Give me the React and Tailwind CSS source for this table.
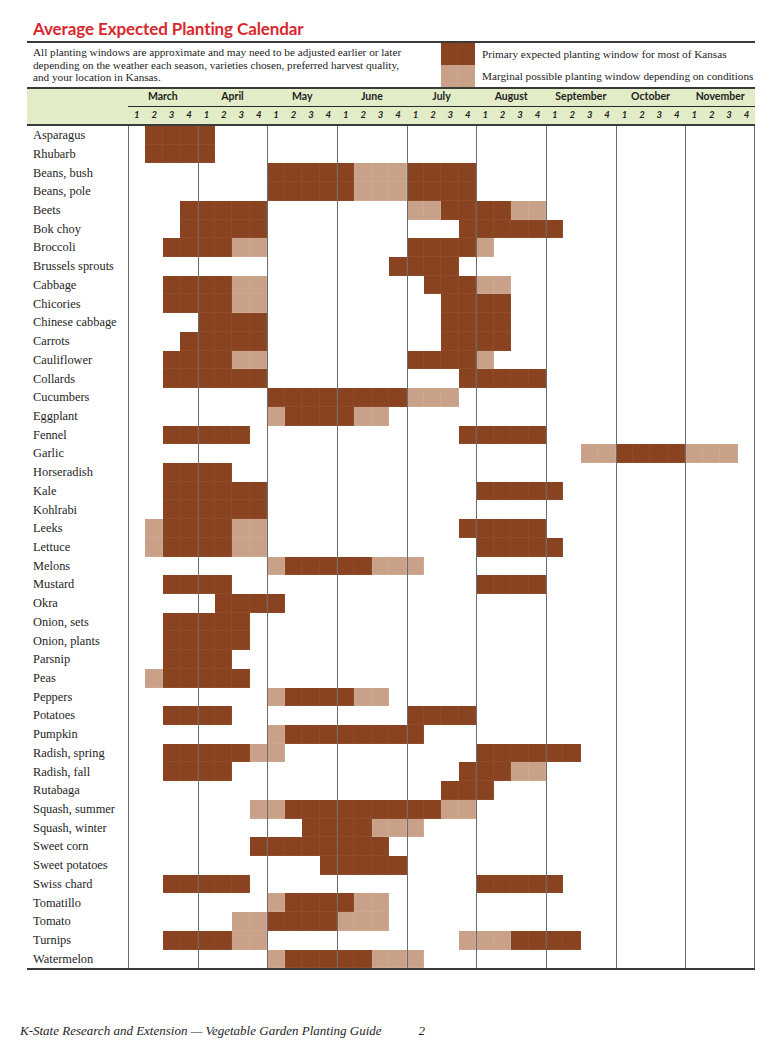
import React from "react";

const P = "p";
const M = "m";

const rows = [
  ["Asparagus", [[1, 4, P]]],
  ["Rhubarb", [[1, 4, P]]],
  ["Beans, bush", [[8, 12, P], [13, 15, M], [16, 19, P]]],
  ["Beans, pole", [[8, 12, P], [13, 15, M], [16, 19, P]]],
  ["Beets", [[3, 7, P], [16, 17, M], [18, 21, P], [22, 23, M]]],
  ["Bok choy", [[3, 7, P], [19, 24, P]]],
  ["Broccoli", [[2, 5, P], [6, 7, M], [16, 19, P], [20, 20, M]]],
  ["Brussels sprouts", [[15, 18, P]]],
  ["Cabbage", [[2, 5, P], [6, 7, M], [17, 19, P], [20, 21, M]]],
  ["Chicories", [[2, 5, P], [6, 7, M], [18, 21, P]]],
  ["Chinese cabbage", [[4, 7, P], [18, 21, P]]],
  ["Carrots", [[3, 7, P], [18, 21, P]]],
  ["Cauliflower", [[2, 5, P], [6, 7, M], [16, 19, P], [20, 20, M]]],
  ["Collards", [[2, 7, P], [19, 23, P]]],
  ["Cucumbers", [[8, 15, P], [16, 18, M]]],
  ["Eggplant", [[8, 8, M], [9, 12, P], [13, 14, M]]],
  ["Fennel", [[2, 6, P], [19, 23, P]]],
  ["Garlic", [[26, 27, M], [28, 31, P], [32, 34, M]]],
  ["Horseradish", [[2, 5, P]]],
  ["Kale", [[2, 7, P], [20, 24, P]]],
  ["Kohlrabi", [[2, 7, P]]],
  ["Leeks", [[1, 1, M], [2, 5, P], [6, 7, M], [19, 23, P]]],
  ["Lettuce", [[1, 1, M], [2, 5, P], [6, 7, M], [20, 24, P]]],
  ["Melons", [[8, 8, M], [9, 13, P], [14, 16, M]]],
  ["Mustard", [[2, 5, P], [20, 23, P]]],
  ["Okra", [[5, 8, P]]],
  ["Onion, sets", [[2, 6, P]]],
  ["Onion, plants", [[2, 6, P]]],
  ["Parsnip", [[2, 5, P]]],
  ["Peas", [[1, 1, M], [2, 6, P]]],
  ["Peppers", [[8, 8, M], [9, 12, P], [13, 14, M]]],
  ["Potatoes", [[2, 5, P], [16, 19, P]]],
  ["Pumpkin", [[8, 8, M], [9, 16, P]]],
  ["Radish, spring", [[2, 6, P], [7, 8, M], [20, 25, P]]],
  ["Radish, fall", [[2, 5, P], [19, 21, P], [22, 23, M]]],
  ["Rutabaga", [[18, 20, P]]],
  ["Squash, summer", [[7, 8, M], [9, 17, P], [18, 19, M]]],
  ["Squash, winter", [[10, 13, P], [14, 16, M]]],
  ["Sweet corn", [[7, 14, P]]],
  ["Sweet potatoes", [[11, 15, P]]],
  ["Swiss chard", [[2, 6, P], [20, 24, P]]],
  ["Tomatillo", [[8, 8, M], [9, 12, P], [13, 14, M]]],
  ["Tomato", [[6, 7, M], [8, 11, P], [12, 14, M]]],
  ["Turnips", [[2, 5, P], [6, 7, M], [19, 21, M], [22, 25, P]]],
  ["Watermelon", [[8, 8, M], [9, 13, P], [14, 16, M]]],
];

const months = ["March", "April", "May", "June", "July", "August", "September", "October", "November"];
const weeks = Array.from({ length: 36 }, (_, i) => i);

function typeAt(segs, i) {
  for (const [s, e, t] of segs) if (i >= s && i <= e) return t;
  return null;
}

function Row({ name, segs }) {
  return (
    <div className="grid grid-cols-[101px_repeat(36,1fr)] h-[18.72px]">
      <div className="pl-[6px] flex items-center text-[12.4px] leading-none text-[#1e1e1e] font-['Liberation_Serif',serif] whitespace-nowrap">
        {name}
      </div>
      {weeks.map((i) => {
        const t = typeAt(segs, i);
        const cls = [
          t === P ? "bg-[#8a4320] shadow-[inset_-1px_-1px_0_0_rgba(255,255,255,0.05)]" : "",
          t === M ? "bg-[#c9a188] shadow-[inset_-1px_-1px_0_0_rgba(255,255,255,0.09)]" : "",
          i % 4 === 0 ? "border-l border-[#6b6b6b]" : "",
          i === 35 ? "border-r-[1.5px] border-[#6b6b6b]" : "",
        ].join(" ");
        return <div key={i} className={cls} />;
      })}
    </div>
  );
}

export default function App() {
  return (
    <div className="w-[775px] h-[1040px] bg-white overflow-hidden">
      <div className="ml-[27px] w-[728px] pt-[17px]">
        <div className="h-[24px] pl-[6px] text-[17px] leading-[24px] font-bold text-[#d9272e] font-['Lato',sans-serif] tracking-[-0.1px]">
          Average Expected Planting Calendar
        </div>
        <div className="border-t-2 border-[#3a3a3a] flex h-[46px]">
          <div className="w-[414px] pl-[6px] pt-[3px] text-[11.2px] leading-[12.7px] text-[#1e1e1e] font-['Liberation_Serif',serif]">
            All planting windows are approximate and may need to be adjusted earlier or later
            <br />
            depending on the weather each season, varieties chosen, preferred harvest quality,
            <br />
            and your location in Kansas.
          </div>
          <div className="flex flex-col">
            <div className="flex h-[23px] items-center">
              <div className="flex h-full w-[34px]">
                <div className="flex-1 bg-[#8a4320] shadow-[inset_-1px_0_0_0_rgba(255,255,255,0.05)]" />
                <div className="flex-1 bg-[#8a4320]" />
              </div>
              <span className="pl-[7px] text-[11.2px] text-[#1e1e1e] font-['Liberation_Serif',serif] whitespace-nowrap">
                Primary expected planting window for most of Kansas
              </span>
            </div>
            <div className="flex h-[23px] items-center">
              <div className="flex h-full w-[34px]">
                <div className="flex-1 bg-[#c9a188] shadow-[inset_-1px_0_0_0_rgba(255,255,255,0.09)]" />
                <div className="flex-1 bg-[#c9a188]" />
              </div>
              <span className="pl-[7px] text-[11.2px] text-[#1e1e1e] font-['Liberation_Serif',serif] whitespace-nowrap">
                Marginal possible planting window depending on conditions
              </span>
            </div>
          </div>
        </div>
        <div className="border-t-2 border-b-2 border-[#3a3a3a] bg-[#e2ecc6] flex">
          <div className="w-[101px] shrink-0" />
          <div className="flex-1 flex flex-col">
            <div className="flex h-[17.5px] border-b-[1.5px] border-[#2a2a2a]">
              {months.map((m) => (
                <div
                  key={m}
                  className="flex-1 flex items-center justify-center text-[10.5px] font-bold text-[#1e1e1e] font-['Lato',sans-serif]"
                >
                  {m}
                </div>
              ))}
            </div>
            <div className="flex h-[17.5px]">
              {weeks.map((i) => (
                <div
                  key={i}
                  className="flex-1 flex items-center justify-center text-[9.5px] font-bold italic text-[#1e1e1e] font-['Lato',sans-serif]"
                >
                  {(i % 4) + 1}
                </div>
              ))}
            </div>
          </div>
        </div>
        <div className="border-b-2 border-[#3a3a3a]">
          {rows.map(([name, segs]) => (
            <Row key={name} name={name} segs={segs} />
          ))}
        </div>
      </div>
      <div className="pl-[20px] mt-[53px] flex items-center text-[13px] leading-[16px] italic text-[#1e1e1e] font-['Liberation_Serif',serif]">
        <span>K-State Research and Extension — Vegetable Garden Planting Guide</span>
        <span className="ml-[37px]">2</span>
      </div>
    </div>
  );
}
